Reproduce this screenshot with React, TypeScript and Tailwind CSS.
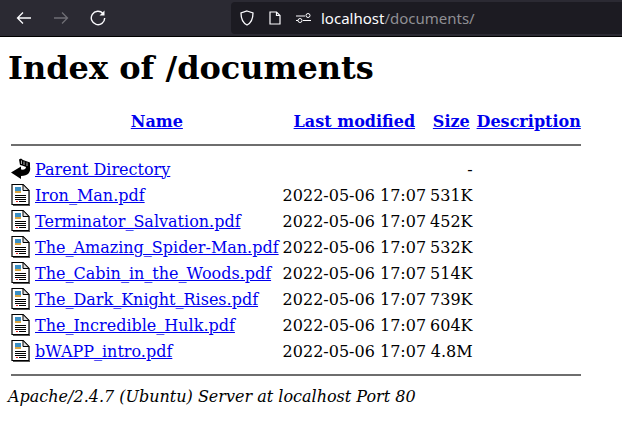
const files = [
  { name: "Iron_Man.pdf", size: "531K" },
  { name: "Terminator_Salvation.pdf", size: "452K" },
  { name: "The_Amazing_Spider-Man.pdf", size: "532K" },
  { name: "The_Cabin_in_the_Woods.pdf", size: "514K" },
  { name: "The_Dark_Knight_Rises.pdf", size: "739K" },
  { name: "The_Incredible_Hulk.pdf", size: "604K" },
  { name: "bWAPP_intro.pdf", size: "4.8M" },
];

function FileIcon() {
  return (
    <svg width="20" height="22" viewBox="0 0 20 22" className="block">
      <path d="M1 0.500H12L18 6.500V20.500H1Z" fill="#fff" stroke="#000" strokeWidth="1.200" />
      <path d="M12 0.500V6.500H18Z" fill="#ddd" stroke="#000" strokeWidth="1" />
      <path d="M2 21.500H19M18.500 7V21" stroke="#555" strokeWidth="1" />
      <rect x="4" y="3" width="6" height="4" fill="#3a8fc4" />
      <rect x="4" y="7" width="6" height="2" fill="#d9a441" />
      <g shapeRendering="crispEdges">
        <path d="M4 11.500H15M4 13.500H15M4 15.500H15M8 17.500H15" stroke="#000" strokeWidth="1" />
        <path d="M5 17.500H7" stroke="#d22" strokeWidth="1" />
      </g>
    </svg>
  );
}

function BackIcon() {
  return (
    <svg width="20" height="22" viewBox="0 0 20 22" className="block">
      <path d="M0 14.500L10 8.500V11.500C13 12 15 11 15 9L19 9C20 14 17 18 10 18V21Z" fill="#000" />
      <path d="M8 1.500L10 0.500L12 2L19 4.500V9H15L11 7.500L9 7Z" fill="#000" />
      <path d="M10.500 2.500V6M13 3.500V7M16 4.500V8" stroke="#aaa" strokeWidth="1" />
    </svg>
  );
}

function Toolbar() {
  return (
    <div className="flex h-[37px] items-center bg-[#2b2a33] border-b border-black">
      <div className="flex w-[231px] items-center pl-[16px] gap-[21px]">
        <svg width="16" height="16" viewBox="0 0 16 16" fill="none" stroke="#fbfbfe" strokeWidth="1.300">
          <path d="M15 8H1.500M7 2.500L1.500 8L7 13.500" />
        </svg>
        <svg width="16" height="16" viewBox="0 0 16 16" fill="none" stroke="#6f6e75" strokeWidth="1.300">
          <path d="M1 8H14.500M9 2.500L14.500 8L9 13.500" />
        </svg>
        <svg width="16" height="16" viewBox="0 0 16 16" fill="none" stroke="#fbfbfe" strokeWidth="1.400">
          <path d="M13 3.500A6.700 6.700 0 1 0 14.700 8" />
          <path d="M9.500 5.500H14.500V0.500Z" fill="#fbfbfe" stroke="none" />
        </svg>
      </div>
      <div className="flex h-[32px] flex-1 items-center rounded-l-[4px] bg-[#1c1b22] pl-[9px]">
        <svg width="14" height="16" viewBox="0 0 14 16" fill="none" stroke="#fbfbfe" strokeWidth="1.300">
          <path d="M7 1L13 3C13 9 11 13 7 15C3 13 1 9 1 3Z" />
        </svg>
        <svg width="12" height="14" viewBox="0 0 12 14" fill="none" stroke="#fbfbfe" strokeWidth="1.200" className="ml-[15px]">
          <path d="M1 1H7.500L11 4.500V13H1Z" />
          <path d="M7.500 1V4.500H11" />
        </svg>
        <svg width="16" height="10" viewBox="0 0 16 10" fill="none" stroke="#fbfbfe" strokeWidth="1" className="ml-[15px]">
          <path d="M0 3H9M0 7.500H2M7 7.500H15" />
          <circle cx="12" cy="2.500" r="2" />
          <circle cx="4" cy="7.500" r="2" />
        </svg>
        <span className="ml-[9px] font-['Noto_Sans',sans-serif] text-[15px] text-[#fbfbfe]">
          localhost<span className="text-[#8f8f94]">/documents/</span>
        </span>
      </div>
    </div>
  );
}

export default function App() {
  return (
    <div className="h-[436px] w-[622px] overflow-hidden bg-white font-['DejaVu_Serif',serif] text-[16px] leading-[19px] text-black">
      <Toolbar />
      <div className="px-[8px]">
        <h1 className="mt-[10px] text-[32px] leading-[42px] font-bold">Index of /documents</h1>
        <table className="mt-[18px] border-separate border-spacing-[2px]">
          <thead>
            <tr>
              <th className="h-[24px] w-[22px] p-px" />
              <th className="p-px text-center font-bold">
                <a href="#" className="text-[#0000ee] underline">Name</a>
              </th>
              <th className="p-px text-center font-bold">
                <a href="#" className="text-[#0000ee] underline">Last modified</a>
              </th>
              <th className="p-px text-center font-bold">
                <a href="#" className="text-[#0000ee] underline">Size</a>
              </th>
              <th className="p-px text-center font-bold">
                <a href="#" className="text-[#0000ee] underline">Description</a>
              </th>
            </tr>
            <tr>
              <th colSpan={5} className="p-px">
                <hr className="my-[8px] h-[2px] border-0 bg-[#6e6e6e]" />
              </th>
            </tr>
          </thead>
          <tbody>
            <tr>
              <td className="p-px"><BackIcon /></td>
              <td className="p-px whitespace-nowrap"><a href="#" className="text-[#0000ee] underline">Parent Directory</a></td>
              <td className="p-px" />
              <td className="p-px text-right">-</td>
              <td className="p-px" />
            </tr>
            {files.map((file) => (
              <tr key={file.name}>
                <td className="p-px"><FileIcon /></td>
                <td className="p-px whitespace-nowrap"><a href="#" className="text-[#0000ee] underline">{file.name}</a></td>
                <td className="p-px text-right whitespace-nowrap">2022-05-06 17:07</td>
                <td className="p-px text-right">{file.size}</td>
                <td className="p-px" />
              </tr>
            ))}
            <tr>
              <th colSpan={5} className="p-px">
                <hr className="my-[8px] h-[2px] border-0 bg-[#6e6e6e]" />
              </th>
            </tr>
          </tbody>
        </table>
        <address className="italic">Apache/2.4.7 (Ubuntu) Server at localhost Port 80</address>
      </div>
    </div>
  );
}
